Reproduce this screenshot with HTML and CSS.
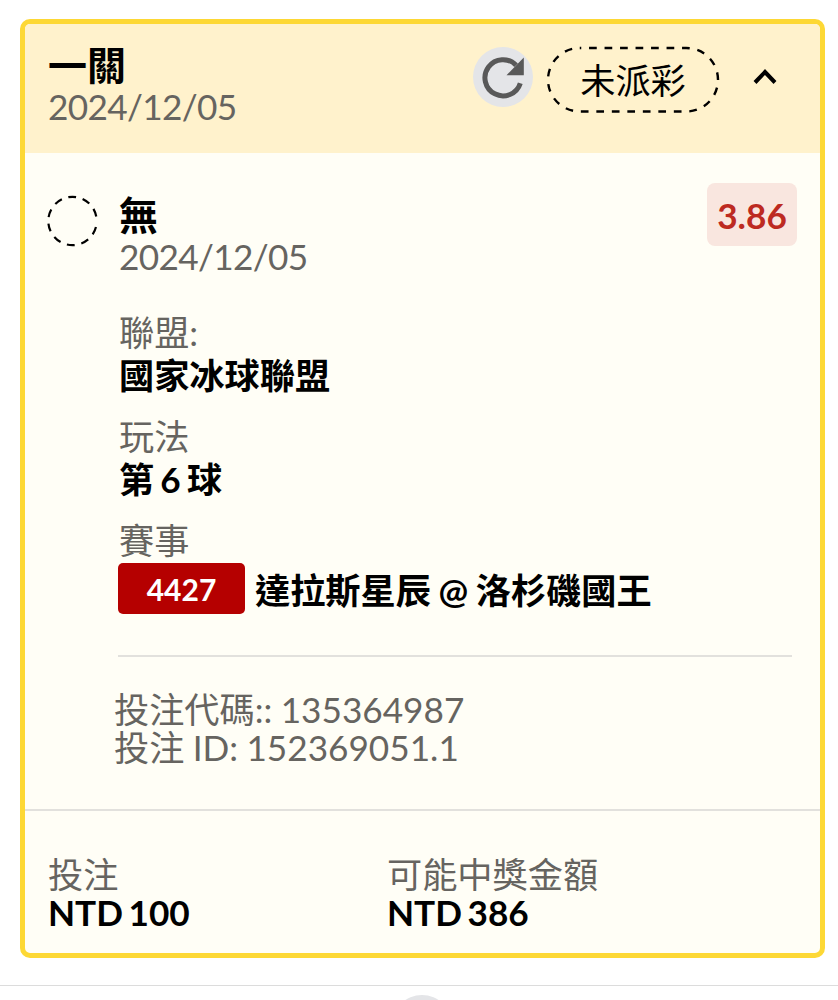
FILE: index.html
```html
<!doctype html>
<html lang="zh-Hant">

	<head>
		<meta charset="UTF-8">
		<title>一關</title>
		<link rel="stylesheet" href="styles.css">
	</head>

	<body>
		<div class="ticket">
			<div class="ticket-head">
				<div>
					<div class="title">一關</div>
					<div class="date">2024/12/05</div>
				</div>
				<div class="head-right">
					<button class="refresh" type="button">
						<svg width="60" height="60" viewBox="0 0 60 60">
							<path d="M47.3 36.2A18.1 18.1 0 1 1 43.1 18.2" fill="none" stroke="#595959" stroke-width="5" />
							<path d="M50.8 10.5V28.2H33.5Z" fill="#595959" />
						</svg>
					</button>
					<svg class="status" width="174" height="68" viewBox="0 0 174 68">
						<rect x="2" y="2" width="170" height="63.5" rx="31.75" fill="none" stroke="#000" stroke-width="2.4" stroke-dasharray="7.7 7.8" stroke-dashoffset="-9.3" />
						<text x="87" y="48" text-anchor="middle">未派彩</text>
					</svg>
					<svg class="arrow" width="26" height="18" viewBox="0 0 26 18">
						<path d="M3 14.5L13 4L23 14.5" fill="none" stroke="#000" stroke-width="4" />
					</svg>
				</div>
			</div>

			<div class="ticket-body">
				<svg class="dot" width="52" height="52" viewBox="0 0 52 52">
					<circle cx="25.5" cy="26" r="24.2" fill="none" stroke="#000" stroke-width="2.2" stroke-dasharray="8 6.7" stroke-dashoffset="-6.1" />
				</svg>
				<div class="detail">
					<div class="detail-head">
						<div>
							<div class="title">無</div>
							<div class="date">2024/12/05</div>
						</div>
						<span class="odds">3.86</span>
					</div>
					<div class="item">
						<div class="label">聯盟:</div>
						<div class="value">國家冰球聯盟</div>
					</div>
					<div class="item">
						<div class="label">玩法</div>
						<div class="value">第 6 球</div>
					</div>
					<div class="item">
						<div class="label">賽事</div>
						<div class="match">
							<span class="code">4427</span>
							<span class="teams">達拉斯星辰 @ 洛杉磯國王</span>
						</div>
					</div>
					<div class="ids">
						<div>投注代碼:: 135364987</div>
						<div>投注 ID: 152369051.1</div>
					</div>
				</div>
			</div>

			<div class="ticket-foot">
				<div>
					<div class="foot-label">投注</div>
					<div class="amount">NTD 100</div>
				</div>
				<div>
					<div class="foot-label">可能中獎金額</div>
					<div class="amount">NTD 386</div>
				</div>
			</div>
		</div>

		<div class="bottom">
			<div class="bottom-btn"></div>
		</div>
	</body>

</html>
```

FILE: styles.css
```css
* {
	box-sizing: border-box;
}

body {
	display: flex;
	flex-direction: column;
	height: 1000px;
	margin: 0;
	padding-top: 19px;
	overflow: hidden;
	background-color: #fff;
	color: #000;
	font-family: Lato, "Noto Sans CJK TC", sans-serif;
	font-size: 35.2px;
	line-height: 40px;
}

svg {
	display: block;
}

.ticket {
	flex: none;
	width: 805px;
	height: 939px;
	margin-left: 20px;
	border: 5px solid #fdd835;
	border-radius: 10px;
	background-color: #fffef6;
	overflow: hidden;
}

.ticket-head {
	display: flex;
	justify-content: space-between;
	height: 129px;
	padding: 21px 42px 0 23px;
	background-color: #fff2cc;
}

.title {
	font-size: 39px;
	font-weight: 700;
	line-height: 41px;
}

.date,
.label,
.foot-label,
.ids {
	color: #666460;
}

.date {
	letter-spacing: -0.65px;
}

.head-right {
	display: flex;
	align-items: flex-start;
}

.refresh {
	width: 60px;
	height: 60px;
	margin: 2px 13px 0 0;
	padding: 0;
	border: 0;
	border-radius: 50%;
	background-color: #e4e5e8;
}

.status {
	margin-top: 1px;
}

.status text {
	font-size: 35.2px;
}

.arrow {
	margin: 23px 0 0 32px;
}

.ticket-body {
	display: flex;
	height: 658px;
	padding: 42px 23px 0 22px;
	border-bottom: 2px solid #e2e1dd;
}

.dot {
	flex: none;
	margin-right: 20px;
}

.detail {
	flex: 1;
}

.detail-head {
	display: flex;
	justify-content: space-between;
	height: 117px;
}

.odds {
	width: 90px;
	height: 63px;
	margin-top: -12px;
	border-radius: 8px;
	background-color: #f9e6df;
	color: #bd2a21;
	font-weight: 700;
	line-height: 65px;
	text-align: center;
}

.item {
	margin-bottom: 18px;
}

.value {
	font-weight: 700;
	line-height: 46px;
	word-spacing: -2.4px;
}

.match {
	display: flex;
	padding-top: 3px;
}

.code {
	width: 127px;
	height: 51px;
	margin: 0 10px 0 -1px;
	border-radius: 5px;
	background-color: #b50000;
	color: #fff;
	font-size: 30px;
	font-weight: 700;
	line-height: 52px;
	text-align: center;
}

.teams {
	font-weight: 700;
	line-height: 54px;
	word-spacing: -1px;
}

.ids {
	margin: 38px 5px 0 -1px;
	padding-top: 33px;
	border-top: 2px solid #e2e1dd;
	line-height: 38px;
	word-spacing: -0.7px;
}

.ids div {
	margin-left: -4px;
}

.ticket-foot {
	display: flex;
	padding: 44px 23px 0;
}

.ticket-foot > div {
	width: 339px;
}

.foot-label {
	line-height: 38px;
}

.amount {
	font-weight: 700;
	line-height: 38px;
	word-spacing: -3px;
}

.bottom {
	flex: none;
	height: 15px;
	margin-top: 27px;
	padding: 9px 0 0 392px;
	border-top: 1px solid #dcdcdc;
	overflow: hidden;
}

.bottom-btn {
	width: 60px;
	height: 60px;
	border-radius: 50%;
	background-color: #e4e5e8;
}
```
